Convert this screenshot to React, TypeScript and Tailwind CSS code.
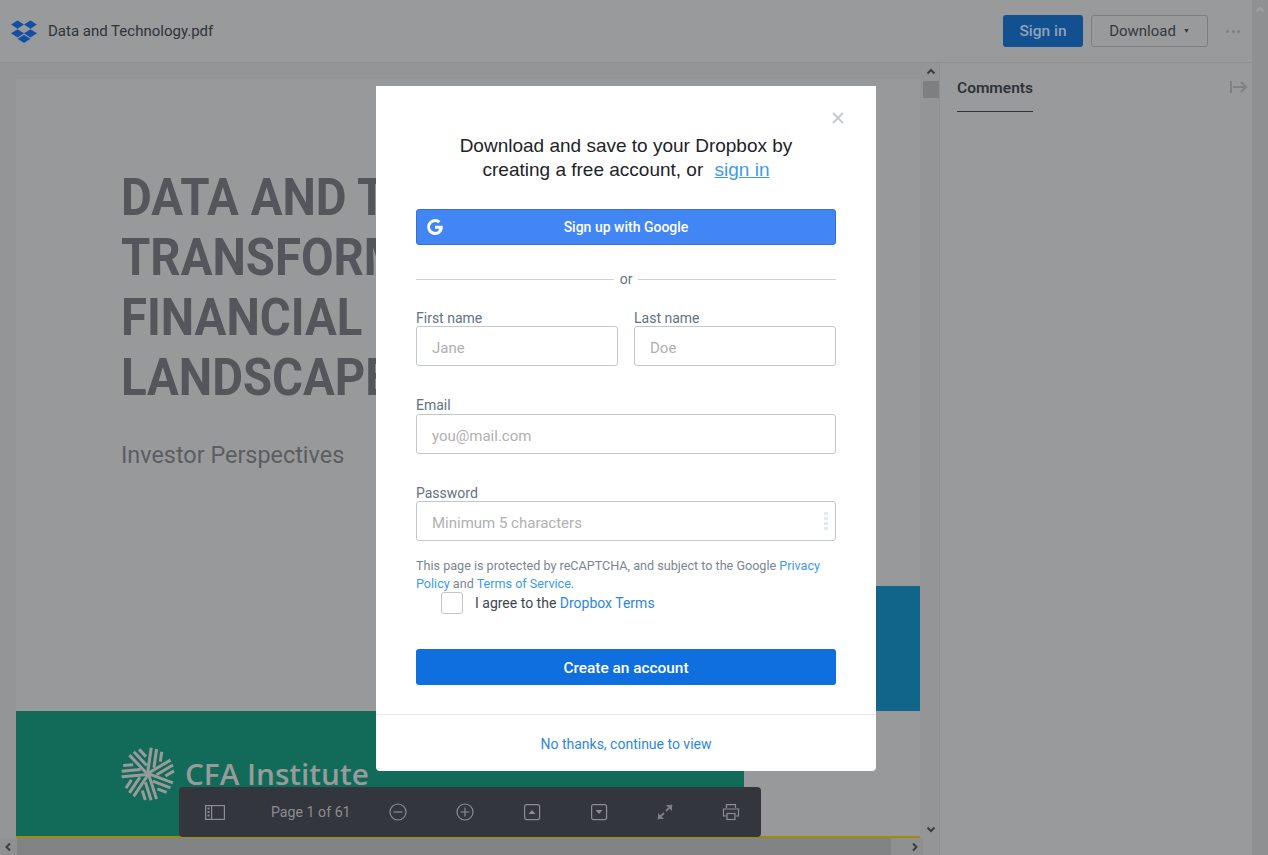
import React from "react";

const Dropbox = () => (
  <svg width="26" height="23" viewBox="0 0 28 25" fill="#124ea3">
    <path d="M7 0.5 L14 5 L7 9.5 L0 5Z" />
    <path d="M21 0.5 L28 5 L21 9.5 L14 5Z" />
    <path d="M7 10 L14 14.5 L7 19 L0 14.5Z" />
    <path d="M21 10 L28 14.5 L21 19 L14 14.5Z" />
    <path d="M14 16 L21 20.5 L14 25 L7 20.5Z" />
  </svg>
);

const CfaLogo = () => {
  const arms = Array.from({ length: 7 }, (_, i) => (i * 360) / 7);
  return (
    <svg width="54" height="54" viewBox="-27 -27 54 54" fill="none" stroke="#999a9b" strokeWidth="3">
      {arms.map((a) => (
        <g key={a} transform={`rotate(${a + 8})`}>
          <path d="M-0.5 0 L-0.5 -26.5" />
          <path d="M5 -7 L5 -26" />
          <path d="M10.5 -14 L10.5 -24" />
        </g>
      ))}
    </svg>
  );
};

const Field = ({ label, placeholder, className, tall }: { label: string; placeholder: string; className?: string; tall?: boolean }) => (
  <label className={`block ${className ?? ""}`}>
    <span className={`block ${tall ? "h-[16px]" : "h-[15px]"} text-[14px] leading-[15px] text-[#637282] font-['Roboto',sans-serif]`}>{label}</span>
    <span className="flex h-[40px] items-center rounded-[3px] border border-[#c1c7cd] bg-white pl-[15px] pt-[4px] text-[15px] text-[#b0b0b0] font-['Roboto',sans-serif]">
      {placeholder}
    </span>
  </label>
);

const ToolIcon = ({ children }: { children: React.ReactNode }) => (
  <svg width="20" height="20" viewBox="0 0 20 20" fill="none" stroke="#8b8d91" strokeWidth="1.2">
    {children}
  </svg>
);

export default function App() {
  return (
    <div className="relative h-[855px] w-[1268px] overflow-hidden bg-[#999a9b] font-['Roboto',sans-serif]">
      <div className="flex h-full">
        <div className="flex h-full w-[1252px] flex-col">
          <header className="flex h-[63px] shrink-0 items-center border-b border-[#8e8f90] pl-[11px] pr-[12px]">
            <Dropbox />
            <span className="ml-[11px] pt-[1px] text-[15px] text-[#2e3339]">Data and Technology.pdf</span>
            <button className="ml-auto h-[32px] w-[80px] rounded-[3px] bg-[#12508f] pt-[1px] text-[15.5px] font-medium text-[#8fa3bb]">Sign in</button>
            <button className="ml-[8px] flex h-[32px] w-[117px] items-center justify-center gap-[7px] rounded-[3px] border border-[#7d7e80] pt-[1px] text-[15px] text-[#34383e]">
              Download <span className="text-[7px] leading-none">▼</span>
            </button>
            <span className="ml-[18px] flex w-[14px] justify-between">
              <i className="h-[3px] w-[3px] rounded-full bg-[#7f8082]" />
              <i className="h-[3px] w-[3px] rounded-full bg-[#7f8082]" />
              <i className="h-[3px] w-[3px] rounded-full bg-[#7f8082]" />
            </span>
          </header>
          <div className="flex min-h-0 flex-1">
            <div className="flex w-[940px] shrink-0 flex-col border-r border-[#8e8f90]">
              <div className="flex min-h-0 flex-1">
                <div className="min-w-0 flex-1 overflow-hidden bg-[#949596] pl-[16px] pt-[16px]">
                  <div className="flex h-[759px] w-[904px] flex-col border-b-2 border-[#a08a10] bg-[#98999b]">
                    <div className="flex-1 pl-[105px] pt-[89px]">
                      <h1 className="w-[600px] origin-left scale-x-[0.91] text-[52px] font-bold leading-[60px] text-[#55565b]">
                        <span className="block">DATA AND T</span>
                        <span className="block">TRANSFORM</span>
                        <span className="block">FINANCIAL</span>
                        <span className="block">LANDSCAPE</span>
                      </h1>
                      <p className="mt-[31px] text-[23.4px] leading-[32px] text-[#5c5d62]">Investor Perspectives</p>
                    </div>
                    <div className="flex">
                      <div className="flex h-[125px] w-[728px] items-start bg-[#126b58] pl-[105px] pt-[36px]">
                        <CfaLogo />
                        <span className="ml-[10px] mt-[7px] font-['Open_Sans',sans-serif] text-[29.7px] font-semibold leading-[40px] text-[#999a9b]">CFA Institute</span>
                      </div>
                      <div className="mt-[-125px] h-[125px] w-[176px] self-start bg-[#12658a]" />
                    </div>
                  </div>
                </div>
                <div className="flex w-[16px] shrink-0 flex-col items-center justify-between bg-[#949596] text-[#3b3d40]">
                  <div className="flex w-full flex-col items-center">
                    <svg width="10" height="10" viewBox="0 0 10 10" className="my-[4px]"><path d="M1.5 6.5L5 3l3.5 3.5" fill="none" stroke="currentColor" strokeWidth="2" /></svg>
                    <div className="h-[17px] w-full bg-[#7e7f81]" />
                  </div>
                  <svg width="10" height="10" viewBox="0 0 10 10" className="mb-[4px]"><path d="M1.5 3.5L5 7l3.5-3.5" fill="none" stroke="currentColor" strokeWidth="2" /></svg>
                </div>
              </div>
              <div className="flex h-[17px] shrink-0 text-[#3b3d40]">
                <div className="flex w-[923px] items-center bg-[#8f9091]">
                  <svg width="17" height="10" viewBox="0 0 17 10" className="shrink-0"><path d="M10 1.5L6.5 5l3.5 3.5" fill="none" stroke="currentColor" strokeWidth="2" /></svg>
                  <div className="h-[17px] w-[874px] bg-[#828384]" />
                  <div className="flex flex-1 items-center justify-center pl-[16px]">
                    <svg width="10" height="10" viewBox="0 0 10 10"><path d="M3 1.5L6.5 5 3 8.5" fill="none" stroke="currentColor" strokeWidth="2" /></svg>
                  </div>
                </div>
                <div className="flex-1 bg-[#949596]" />
              </div>
            </div>
            <aside className="relative flex-1 pl-[17px] pt-[16px]">
              <div className="h-[33px] w-fit border-b border-[#2e3339] text-[15.5px] font-semibold leading-[18px] text-[#2e3339]">Comments</div>
              <svg width="18" height="14" viewBox="0 0 18 14" fill="none" stroke="#808183" strokeWidth="2" className="absolute right-[4px] top-[17px]">
                <path d="M1 1v12M3 7h13M11 2l5 5-5 5" />
              </svg>
            </aside>
          </div>
        </div>
        <div className="flex w-[16px] flex-col items-center bg-[#8f9091] pt-[5px] text-[#a0a1a2]">
          <svg width="10" height="10" viewBox="0 0 10 10"><path d="M1.5 6.5L5 3l3.5 3.5" fill="none" stroke="currentColor" strokeWidth="2" /></svg>
        </div>
      </div>

      <div className="absolute left-[179px] top-[787px] flex h-[50px] w-[582px] items-center rounded-[4px] bg-[#33363d] text-[#8b8d91]">
        <div className="ml-[26px]">
          <ToolIcon>
            <rect x="0.6" y="3.6" width="18.8" height="13.8" />
            <path d="M6.6 3.6v13.8" />
            <path d="M2.5 6.5h2M2.5 10h2M2.5 13.5h2" strokeWidth="2" />
          </ToolIcon>
        </div>
        <span className="ml-[46px] w-[80px] whitespace-nowrap pt-[2px] text-[14.2px]">Page 1 of 61</span>
        <div className="ml-[37px]"><ToolIcon><circle cx="10" cy="10" r="8" /><path d="M5.5 10h9" /></ToolIcon></div>
        <div className="ml-[47px]"><ToolIcon><circle cx="10" cy="10" r="8" /><path d="M5.5 10h9M10 5.5v9" /></ToolIcon></div>
        <div className="ml-[47px]"><ToolIcon><rect x="2.6" y="2.6" width="15" height="15" rx="2" /><path d="M10 8l3.5 4h-7z" fill="#8b8d91" stroke="none" /></ToolIcon></div>
        <div className="ml-[47px]"><ToolIcon><rect x="2.6" y="2.6" width="15" height="15" rx="2" /><path d="M10 12L6.5 8h7z" fill="#8b8d91" stroke="none" /></ToolIcon></div>
        <div className="ml-[46px]"><ToolIcon><path d="M3 17l6-6M17 3l-6 6" strokeWidth="1.8" stroke="#7c7e82" /><path d="M3 11v6h6M11 3h6v6" fill="#7c7e82" stroke="none" /></ToolIcon></div>
        <div className="ml-[46px]"><ToolIcon><path d="M5.5 6V2.6h9V6M5.5 14H2.5V7h15v7h-3" /><rect x="6" y="11.5" width="8" height="6" /></ToolIcon></div>
      </div>

      <div className="absolute left-[376px] top-[86px] flex h-[685px] w-[500px] flex-col rounded-b-[4px] bg-white">
        <div className="relative flex-1 px-[40px] pt-[48px]">
          <svg width="12" height="12" viewBox="0 0 12 12" className="absolute right-[32px] top-[26px]"><path d="M1 1l10 10M11 1L1 11" stroke="#c4c9ce" strokeWidth="1.8" /></svg>
          <h2 className="text-center text-[19px] leading-[24px] text-[#1e2328] font-['Liberation_Sans',sans-serif]">
            Download and save to your Dropbox by<br />creating a free account, or <a className="ml-[6px] text-[#3d9ae8] underline">sign in</a>
          </h2>
          <button className="relative mt-[27px] flex h-[36px] w-full items-center justify-center rounded-[3px] border border-[#3a6fd0] bg-[#4285f4] text-[14px] font-medium text-white">
            <svg width="16" height="16" viewBox="0 0 24 24" className="absolute left-[10px] top-[9px]" fill="white">
              <path d="M12 10v4.5h6.4c-.6 3-3.2 5-6.4 5a7.5 7.5 0 1 1 4.9-13.2l3.3-3.3A12 12 0 1 0 12 24c6.6 0 11.7-4.7 11.7-12 0-.7-.1-1.4-.2-2z" />
            </svg>
            Sign up with Google
          </button>
          <div className="mt-[26px] flex items-center gap-[6px] text-[14px] leading-[16px] text-[#637282]">
            <div className="h-px flex-1 bg-[#cfd2d5]" />or<div className="h-px flex-1 bg-[#cfd2d5]" />
          </div>
          <div className="mt-[24px] flex gap-[16px]">
            <Field label="First name" placeholder="Jane" className="flex-1" />
            <Field label="Last name" placeholder="Doe" className="flex-1" />
          </div>
          <Field label="Email" placeholder="you@mail.com" className="mt-[32px]" tall />
          <div className="relative mt-[32px]">
            <Field label="Password" placeholder="Minimum 5 characters" />
            <div className="absolute right-[8px] top-[26px] flex flex-col gap-[2px]">
              {[0, 1, 2, 3].map((i) => <i key={i} className="h-[3px] w-[4px] bg-[#dcecfb]" />)}
            </div>
          </div>
          <p className="mt-[16px] text-[12.6px] leading-[18px] text-[#7a8591]">
            This page is protected by reCAPTCHA, and subject to the Google <a className="text-[#3d9ae8]">Privacy</a> <a className="text-[#3d9ae8]">Policy</a> and <a className="text-[#3d9ae8]">Terms of Service</a>.
          </p>
          <div className="mt-[-1px] flex h-[22px] items-center pl-[25px] text-[14px] text-[#3d4550]">
            <span className="h-[22px] w-[22px] rounded-[3px] border border-[#c1c7cd]" />
            <span className="ml-[12px]">I agree to the <a className="text-[#2f86dd]">Dropbox Terms</a></span>
          </div>
          <button className="mt-[35px] h-[36px] w-full rounded-[3px] bg-[#0f6fdf] pt-[3px] text-[15.4px] font-medium text-white">Create an account</button>
        </div>
        <div className="flex h-[57px] items-center justify-center border-t border-[#e6e8ea] pt-[3px] text-[14px] text-[#2f86dd]">No thanks, continue to view</div>
      </div>
    </div>
  );
}
